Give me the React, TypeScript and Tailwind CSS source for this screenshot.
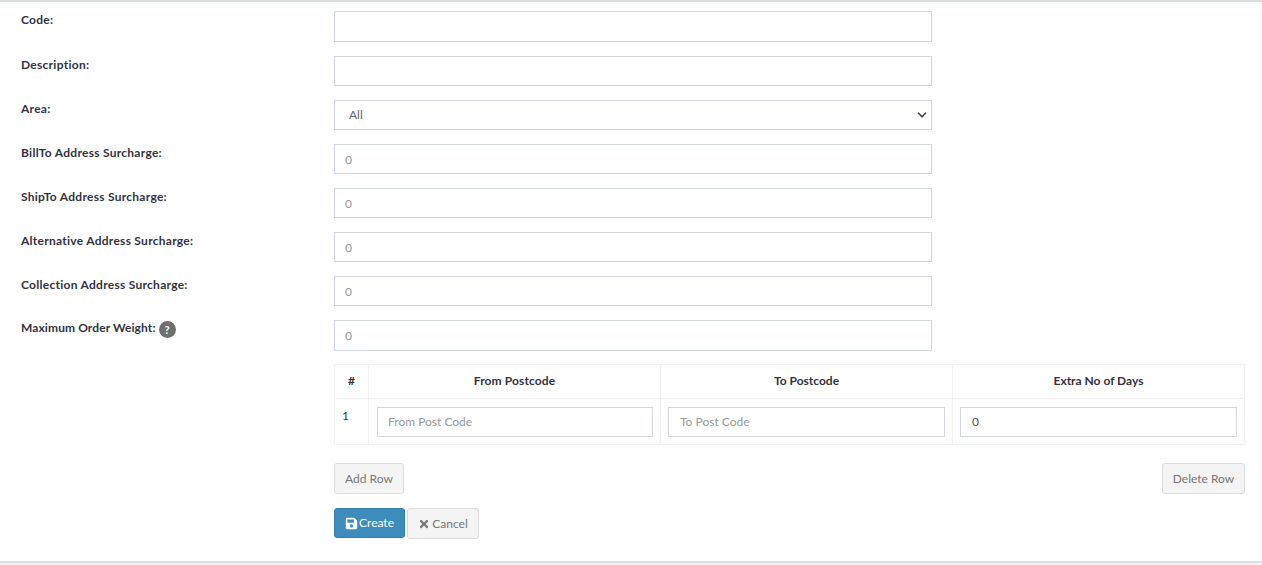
import * as React from 'react';
import { FaSave, FaTimes } from 'react-icons/fa';
import { ChevronDown } from 'lucide-react';

const inputCls =
    'h-[30px] w-full border border-[#d2d6e3] bg-white px-[10px] text-[12px] text-[#555] outline-none placeholder:text-[#999]';
const cellInputCls = inputCls + ' block px-[11px] pb-[1px]';

const Row: React.FC<{ label: string; help?: boolean; tall?: boolean; children: React.ReactNode }> = ({
    label,
    help,
    tall,
    children,
}) => (
    <div className={tall ? 'flex h-[31px] items-start' : 'flex h-[30px] items-start'}>
        <div
            className={
                help
                    ? 'flex w-[334px] items-start pl-[21px] text-[12px] font-bold leading-[16px] tracking-[0.1px] text-[#33333d]'
                    : 'flex w-[334px] items-center pl-[21px] pt-[1px] text-[12px] font-bold leading-[16px] tracking-[0.27px] text-[#33333d]'
            }
        >
            {label}
            {help && (
                <span className="ml-[3px] mt-[1px] flex h-[17px] w-[17px] items-center justify-center rounded-full bg-[#6f6f6f] text-[11px] font-bold text-white">
                    ?
                </span>
            )}
        </div>
        <div className="w-[598px]">{children}</div>
    </div>
);

const btn = 'flex h-[31px] items-center justify-center rounded-[3px] border border-[#ddd] bg-[#f4f4f4] text-[12px] text-[#777]';

export default function App() {
    return (
        <div className="flex h-[565px] w-[1262px] flex-col overflow-hidden bg-white font-['Lato','Noto_Sans',sans-serif]">
            <div className="h-[2px] bg-[#d8dbe8]" />
            <div className="flex flex-1 flex-col pt-[9px]">
                <div className="flex flex-col gap-[14px]">
                    <Row label="Code:" tall>
                        <input className={inputCls + ' h-[31px]'} />
                    </Row>
                    <Row label="Description:">
                        <input className={inputCls} />
                    </Row>
                    <Row label="Area:">
                        <div className="relative">
                            <select className={inputCls + ' appearance-none pl-[14px] text-[#666]'}>
                                <option>All</option>
                            </select>
                            <ChevronDown size={14} strokeWidth={3} className="absolute right-[3px] top-[8px] text-[#444]" />
                        </div>
                    </Row>
                    <Row label="BillTo Address Surcharge:">
                        <input className={inputCls} placeholder="0" />
                    </Row>
                    <Row label="ShipTo Address Surcharge:">
                        <input className={inputCls} placeholder="0" />
                    </Row>
                    <Row label="Alternative Address Surcharge:">
                        <input className={inputCls} placeholder="0" />
                    </Row>
                    <Row label="Collection Address Surcharge:">
                        <input className={inputCls} placeholder="0" />
                    </Row>
                    <Row label="Maximum Order Weight:" help>
                        <input className={inputCls + ' h-[31px]'} placeholder="0" />
                    </Row>
                </div>

                <div className="ml-[334px] mt-[14px] w-[911px]">
                    <table className="w-full table-fixed border-collapse text-[12px] text-[#33333d]">
                        <thead>
                            <tr className="h-[34px]">
                                <th className="w-[34px] border border-[#f2f2f4] pb-[2px] font-bold">#</th>
                                <th className="w-[292px] border border-[#f2f2f4] pb-[2px] font-bold tracking-[0.12px]">From Postcode</th>
                                <th className="w-[292px] border border-[#f2f2f4] pb-[2px] font-bold">To Postcode</th>
                                <th className="border border-[#f2f2f4] pb-[2px] font-bold">Extra No of Days</th>
                            </tr>
                        </thead>
                        <tbody>
                            <tr className="h-[46px]">
                                <td className="border border-[#f2f2f4] pb-[12px] pl-[7px] align-middle">1</td>
                                <td className="border border-[#f2f2f4] pl-[8px] pr-[7px]">
                                    <input className={inputCls + ' block pb-[1px]'} placeholder="From Post Code" />
                                </td>
                                <td className="border border-[#f2f2f4] px-[7px]">
                                    <input className={cellInputCls} placeholder="To Post Code" />
                                </td>
                                <td className="border border-[#f2f2f4] px-[7px]">
                                    <input className={cellInputCls} defaultValue="0" />
                                </td>
                            </tr>
                        </tbody>
                    </table>

                    <div className="mt-[18px] flex justify-between">
                        <button className={btn + ' w-[70px]'}>Add Row</button>
                        <button className={btn + ' w-[83px]'}>Delete Row</button>
                    </div>

                    <div className="mt-[14px] flex gap-[2px]">
                        <button className="flex h-[30px] w-[71px] items-center justify-center gap-[1px] rounded-[3px] border border-[#367fa9] bg-[#3c8dbc] text-[12px] text-white">
                            <FaSave size={13} />
                            Create
                        </button>
                        <button className={btn + ' h-[30px] w-[72px] gap-[2px]'}>
                            <FaTimes size={12} />
                            Cancel
                        </button>
                    </div>
                </div>
            </div>
            <div className="h-[4px] border-t-2 border-[#dcdfe8] bg-[#f0f2f7]" />
        </div>
    );
}
